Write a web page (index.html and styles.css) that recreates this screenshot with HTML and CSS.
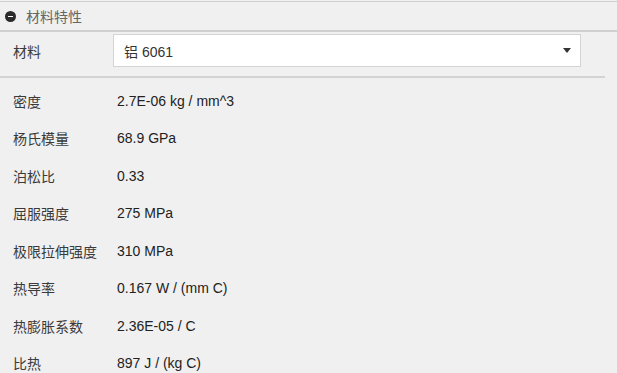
FILE: index.html
```html
<!DOCTYPE html>
<html lang="zh">
<head>
<meta charset="utf-8">
<link rel="stylesheet" href="styles.css">
</head>
<body>
<div class="panel">
  <div class="header">
    <span class="collapse-icon"></span>
    <span class="header-title">材料特性</span>
  </div>
  <div class="material-row">
    <span class="label">材料</span>
    <div class="select">
      <span class="select-text">铝 6061</span>
      <span class="caret"></span>
    </div>
  </div>
  <div class="divider"></div>
  <div class="props">
    <div class="prop"><span class="label">密度</span><span class="value">2.7E-06 kg / mm^3</span></div>
    <div class="prop"><span class="label">杨氏模量</span><span class="value">68.9 GPa</span></div>
    <div class="prop"><span class="label">泊松比</span><span class="value">0.33</span></div>
    <div class="prop"><span class="label">屈服强度</span><span class="value">275 MPa</span></div>
    <div class="prop"><span class="label">极限拉伸强度</span><span class="value">310 MPa</span></div>
    <div class="prop"><span class="label">热导率</span><span class="value">0.167 W / (mm C)</span></div>
    <div class="prop"><span class="label">热膨胀系数</span><span class="value">2.36E-05 / C</span></div>
    <div class="prop"><span class="label">比热</span><span class="value">897 J / (kg C)</span></div>
  </div>
</div>
</body>
</html>
```
FILE: styles.css
```css
html, body {
  margin: 0;
  padding: 0;
  background: #f0f0f0;
  overflow: hidden;
}
body {
  font-family: "Liberation Sans", "Noto Sans CJK SC", sans-serif;
  font-size: 14px;
  color: #333;
}
.panel {
  width: 617px;
  height: 373px;
  padding-top: 1px;
  box-sizing: border-box;
}
.header {
  height: 28px;
  border-top: 1px solid #cfcfcf;
  border-bottom: 2px solid #d0d0d0;
  display: flex;
  align-items: center;
  padding-left: 5px;
  background: #f0f0f0;
}
.collapse-icon {
  width: 11px;
  height: 11px;
  border-radius: 50%;
  background: #2b2b2b;
  position: relative;
  margin-right: 10px;
  margin-top: 1px;
}
.collapse-icon::after {
  content: "";
  position: absolute;
  left: 3px;
  top: 5px;
  width: 5px;
  height: 1px;
  background: #fff;
}
.header-title {
  color: #666;
  font-family: "Noto Sans CJK SC", sans-serif;
  font-size: 14px;
}
.material-row {
  display: flex;
  align-items: center;
  padding: 2px 0 9px 13px;
}
.label {
  width: 100px;
  font-family: "Noto Sans CJK SC", sans-serif;
  color: #3a3a3a;
}
.select {
  width: 447px;
  height: 31px;
  background: #fff;
  border: 1px solid #d4d4d4;
  display: flex;
  align-items: center;
  justify-content: space-between;
  padding: 0 9px 0 10px;
}
.select-text {
  color: #333;
  font-family: "Liberation Sans", "Noto Sans CJK SC", sans-serif;
}
.caret {
  width: 0;
  height: 0;
  border-left: 4px solid transparent;
  border-right: 4px solid transparent;
  border-top: 5px solid #333;
}
.divider {
  width: 605px;
  height: 2px;
  background: #d3d3d3;
}
.props {
  padding-top: 4px;
}
.prop {
  height: 37.5px;
  display: flex;
  align-items: center;
  padding-left: 13px;
}
.prop .label {
  width: 104px;
}
.value {
  color: #222;
}
```
